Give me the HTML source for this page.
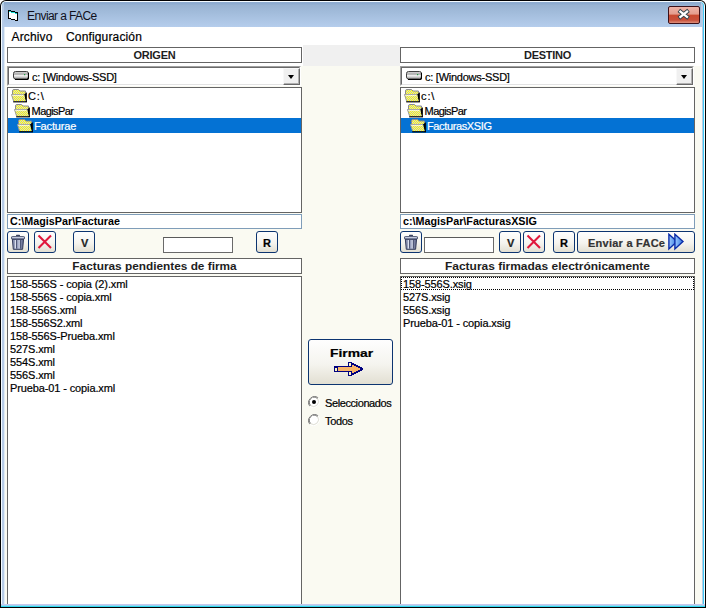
<!DOCTYPE html>
<html><head><meta charset="utf-8">
<style>
*{margin:0;padding:0;box-sizing:border-box}
html,body{width:706px;height:608px;overflow:hidden;background:#fff;font-family:"Liberation Sans",sans-serif;font-size:11px;color:#000}
.a{position:absolute}
.t{position:absolute;white-space:nowrap;line-height:13px;-webkit-text-stroke:0.2px currentColor}
.li{letter-spacing:-0.12px}
.b{font-weight:bold}
.hdr{position:absolute;border:1px solid #646464;background:#fff;height:16px}
.hdr span{position:absolute;left:0;right:0;text-align:center;top:1px;line-height:13px;font-weight:bold;color:#1e1e1e}
.combo{position:absolute;height:20px;background:#fff;border-top:1px solid #a0a0a0;border-left:1px solid #a0a0a0;border-right:1px solid #fff;border-bottom:1px solid #fff}
.combo .in{position:absolute;left:0;top:0;right:0;bottom:0;border-top:1px solid #696969;border-left:1px solid #696969;border-right:1px solid #e3e3e3;border-bottom:1px solid #e3e3e3}
.dd{position:absolute;width:17px;height:17px;background:#f0f0f0;border-top:1px solid #f8f8f8;border-left:1px solid #f8f8f8;border-right:1px solid #696969;border-bottom:1px solid #696969;box-shadow:inset -1px -1px 0 #b0b0b0}
.dd i{position:absolute;left:3.6px;top:6px;width:0;height:0;border-left:3.6px solid transparent;border-right:3.6px solid transparent;border-top:4.2px solid #000}
.list{position:absolute;border:1px solid #646464;background:#fff}
.path{position:absolute;border:1px solid #7f9db9;background:#fff;height:15px}
.path span{position:absolute;left:2px;top:1px;line-height:12px;font-size:10px;font-weight:bold;transform:scaleX(1.075);transform-origin:0 0}
.btn{position:absolute;width:22px;height:22px;border:1px solid #0c3470;border-radius:3px;background:linear-gradient(#fefefe 0%,#f5f4ef 55%,#e2dfd2 100%)}
.tb{position:absolute;height:16px;border:1px solid #6a6a6a;border-top-color:#5a5a5a;background:#fff}
.sel{position:absolute;background:#0472d4}
</style></head><body>
<svg width="0" height="0" style="position:absolute">
<defs>
<pattern id="dith" width="2" height="2" patternUnits="userSpaceOnUse"><rect width="2" height="2" fill="#d0d0d8"/><rect width="1" height="1" fill="#ffff00"/><rect x="1" y="1" width="1" height="1" fill="#ffff00"/></pattern>
<symbol id="folder" viewBox="0 0 17 14">
<path d="M1.5,5.5 V2 Q1.5,0.5 3,0.5 H7.5 L9,2 H14.5 V5 Z" fill="url(#dith)"/>
<path d="M1.5,5.5 V2 Q1.5,0.5 3,0.5 H7.5 L9,2 H14.5 V4" fill="none" stroke="#8c8c8c" stroke-width="1"/>
<path d="M13.2,5.2 L15.9,3.2 V12.9 H14.6 Z" fill="#000"/>
<path d="M0.5,5.5 H13 L14.8,12.2 H2.6 Z" fill="url(#dith)"/>
<path d="M2.6,12.2 L0.5,5.5 H13" fill="none" stroke="#9a9a9a" stroke-width="1"/>
<path d="M1.3,6.3 H12.5" stroke="#fff" stroke-width="0.8"/>
<path d="M2.2,12.8 H15.9" stroke="#000" stroke-width="1.2"/>
</symbol>
<symbol id="drive" viewBox="0 0 16 9">
<linearGradient id="dg" x1="0" y1="0" x2="0" y2="1"><stop offset="0" stop-color="#e0e0e0"/><stop offset="0.35" stop-color="#a8a8a8"/><stop offset="0.55" stop-color="#f4f4f4"/><stop offset="0.75" stop-color="#c8c8c8"/><stop offset="1" stop-color="#909090"/></linearGradient>
<rect x="0.5" y="0.5" width="15" height="7.5" rx="2" fill="url(#dg)" stroke="#404040" stroke-width="1"/>
<path d="M2,8.5 H14 Q15.5,8.5 15.5,6.5 V2" fill="none" stroke="#000" stroke-width="1.2"/>
<rect x="11" y="3" width="1.2" height="1.2" fill="#20a040"/>
</symbol>
<symbol id="trash" viewBox="0 0 22 22">
<linearGradient id="tg" x1="0" y1="0" x2="1" y2="0"><stop offset="0" stop-color="#8088a8"/><stop offset="0.5" stop-color="#a4acc8"/><stop offset="1" stop-color="#5c6488"/></linearGradient>
<rect x="9" y="3.8" width="4" height="1.6" rx="0.6" fill="#3c4462"/>
<path d="M5.3,8 L6.3,18.3 H15.6 L16.6,8 Z" fill="url(#tg)" stroke="#343c5a" stroke-width="1"/>
<path d="M8.4,9 V17.5 M12.2,9 V17.5" stroke="#e4e8f4" stroke-width="1"/>
<path d="M9.6,9 V17.5 M13.4,9 V17.5" stroke="#485070" stroke-width="1"/>
<rect x="4.5" y="5.5" width="13" height="2.6" rx="1" fill="#a0a8c4" stroke="#343c5a" stroke-width="1"/>
<path d="M5.3,6.2 H16.7" stroke="#dfe4f2" stroke-width="0.8"/>
</symbol>
<symbol id="redx" viewBox="0 0 22 22">
<path d="M4.5,4.5 L17,17 M17,4.5 L4.5,17" stroke="#e0183c" stroke-width="2.1"/>
</symbol>
<symbol id="ddarrow" viewBox="0 0 18 18">
<linearGradient id="ag" x1="0" y1="0" x2="1" y2="0"><stop offset="0" stop-color="#9ccaff"/><stop offset="1" stop-color="#3478e0"/></linearGradient>
<path d="M0.9,1.2 L9,8.6 L0.9,15.9 Z" fill="url(#ag)" stroke="#0a2ca8" stroke-width="1.4" stroke-linejoin="miter"/>
<path d="M6.9,1.2 L15,8.6 L6.9,15.9 Z" fill="url(#ag)" stroke="#0a2ca8" stroke-width="1.4" stroke-linejoin="miter"/>
</symbol>
<symbol id="radio" viewBox="0 0 12 12">
<path d="M10.2,1.8 A6,6 0 0 0 1.8,10.2" fill="none" stroke="#808080" stroke-width="1"/>
<path d="M9.5,2.5 A5,5 0 0 0 2.5,9.5" fill="none" stroke="#404040" stroke-width="1"/>
<circle cx="6" cy="6" r="4.4" fill="#fff"/>
<path d="M1.8,10.2 A6,6 0 0 0 10.2,1.8" fill="none" stroke="#fff" stroke-width="1"/>
<path d="M2.5,9.5 A5,5 0 0 0 9.5,2.5" fill="none" stroke="#e0e0d8" stroke-width="1"/>
</symbol>
</defs></svg>
<!-- window frame -->
<div class="a" style="left:0;top:0;width:706px;height:608px;background:#000;border-radius:6px 6px 0 0"></div>
<div class="a" style="left:1px;top:1px;width:704px;height:607px;background:#f4fbff;border-radius:5px 5px 0 0"></div>
<div class="a" style="left:2px;top:2px;width:702px;height:606px;background:#40c8f4;border-radius:4px 4px 0 0"></div>
<div class="a" style="left:2px;top:2px;width:701px;height:606px;background:#b6cbe6;border-radius:4px 4px 0 0"></div>
<!-- title gradient -->
<div class="a" style="left:4px;top:2px;width:697px;height:25px;background:linear-gradient(#8eacd0 0px,#8eacd0 2px,#98b3d2 3px,#b5cdec 25px)"></div>
<!-- title icon -->
<svg class="a" style="left:0;top:0" width="20" height="22" viewBox="0 0 20 22" shape-rendering="crispEdges">
<path d="M9,11 H11 V12 H15 V13 H17 V20 H15 V19 H11 V18 H9 Z" fill="#fff"/>
<path d="M9,11h2v1h4v1h2v1h-2v-1h-4v-1h-2z" fill="#18e0d8"/>
<rect x="8" y="10" width="3" height="1" fill="#000"/><rect x="11" y="11" width="4" height="1" fill="#000"/><rect x="15" y="12" width="3" height="1" fill="#000"/>
<rect x="8" y="10" width="1" height="9" fill="#000"/><rect x="17" y="12" width="1" height="9" fill="#000"/>
<rect x="8" y="18" width="3" height="1" fill="#000"/><rect x="11" y="19" width="4" height="1" fill="#000"/><rect x="15" y="20" width="3" height="1" fill="#000"/>
</svg>
<div class="t" style="left:27px;top:9px;font-size:12px;line-height:14px;color:#10101c;letter-spacing:-0.6px;-webkit-text-stroke:0">Enviar a FACe</div>
<!-- close button -->
<div class="a" style="left:668px;top:6px;width:32px;height:18px;border:1px solid #3c1018;border-radius:2px;background:linear-gradient(#eeb4a8 0,#e49c8c 45%,#c94a30 50%,#c8503a 82%,#e0907c 100%)"></div>
<svg class="a" style="left:664px;top:2px" width="40" height="26" viewBox="664 2 40 26">
<path d="M680.4,11.6 L687,16.9 M687,11.6 L680.4,16.9" stroke="#2c4048" stroke-width="4.0" stroke-linecap="square"/>
<path d="M680.4,11.6 L687,16.9 M687,11.6 L680.4,16.9" stroke="#fff" stroke-width="2.3" stroke-linecap="square"/>
</svg>
<!-- client -->
<div class="a" style="left:4px;top:27px;width:1px;height:577px;background:#e2ecf4"></div>
<div class="a" style="left:5px;top:27px;width:697px;height:577px;background:#fafaf2"></div>
<div class="a" style="left:5px;top:27px;width:697px;height:18px;background:#fff"></div>
<div class="a" style="left:5px;top:45px;width:298px;height:21px;background:#fff"></div>
<div class="a" style="left:303px;top:45px;width:97px;height:21px;background:#f0f0f0"></div>
<div class="a" style="left:400px;top:45px;width:302px;height:21px;background:#fff"></div>
<div class="t" style="left:11.5px;top:30px;font-size:12px;line-height:14px;letter-spacing:0.15px">Archivo</div>
<div class="t" style="left:66px;top:30px;font-size:12px;line-height:14px;letter-spacing:0.15px">Configuración</div>

<!-- LEFT PANEL -->
<div class="hdr" style="left:7px;top:47px;width:295px"><span style="letter-spacing:-0.24px">ORIGEN</span></div>
<div class="combo" style="left:7px;top:66px;width:294px">
 <div class="in"></div>
</div>
<div class="dd" style="left:283px;top:68px"><i></i></div>
<svg class="a" style="left:13px;top:71px" width="16" height="9"><use href="#drive"/></svg>
<div class="t" style="left:32px;top:71px;letter-spacing:-0.25px">c: [Windows-SSD]</div>
<div class="list" style="left:7px;top:87px;width:295px;height:126px"></div>
<div class="sel" style="left:8px;top:118px;width:293px;height:15px"></div>
<svg class="a" style="left:11px;top:89px" width="17" height="14"><use href="#folder"/></svg>
<div class="t" style="left:28px;top:90px;letter-spacing:0.9px">C:\</div>
<svg class="a" style="left:14px;top:104px" width="17" height="14"><use href="#folder"/></svg>
<div class="t" style="left:31.6px;top:105px;letter-spacing:-0.6px">MagisPar</div>
<svg class="a" style="left:17px;top:119px" width="17" height="14"><use href="#folder"/></svg>
<div class="t" style="left:34px;top:120px;color:#fff;letter-spacing:-0.15px">Facturae</div>
<div class="path" style="left:7px;top:214px;width:295px"><span>C:\MagisPar\Facturae</span></div>
<div class="btn" style="left:7px;top:231px"></div><svg class="a" style="left:7px;top:231px" width="22" height="22"><use href="#trash"/></svg>
<div class="btn" style="left:34px;top:231px"></div><svg class="a" style="left:34px;top:231px" width="22" height="22"><use href="#redx"/></svg>
<div class="btn" style="left:73px;top:231px"><div class="t b" style="left:7px;top:5px;color:#222">V</div></div>
<div class="tb" style="left:163px;top:237px;width:70px"></div>
<div class="btn" style="left:256px;top:231px"><div class="t b" style="left:6px;top:5px">R</div></div>
<div class="hdr" style="left:7px;top:258px;width:295px"><span style="transform:scaleX(1.075)">Facturas pendientes de firma</span></div>
<div class="list" style="left:7px;top:276px;width:295px;height:340px"></div>
<div class="t li" style="left:10px;top:278px">158-556S - copia (2).xml</div>
<div class="t li" style="left:10px;top:291px">158-556S - copia.xml</div>
<div class="t li" style="left:10px;top:304px">158-556S.xml</div>
<div class="t li" style="left:10px;top:317px">158-556S2.xml</div>
<div class="t li" style="left:10px;top:330px">158-556S-Prueba.xml</div>
<div class="t li" style="left:10px;top:343px">527S.xml</div>
<div class="t li" style="left:10px;top:356px">554S.xml</div>
<div class="t li" style="left:10px;top:369px">556S.xml</div>
<div class="t li" style="left:10px;top:382px">Prueba-01 - copia.xml</div>

<!-- RIGHT PANEL -->
<div class="hdr" style="left:400px;top:47px;width:295px"><span style="letter-spacing:-0.28px">DESTINO</span></div>
<div class="combo" style="left:400px;top:66px;width:294px">
 <div class="in"></div>
</div>
<div class="dd" style="left:676px;top:68px"><i></i></div>
<svg class="a" style="left:406px;top:71px" width="16" height="9"><use href="#drive"/></svg>
<div class="t" style="left:425px;top:71px;letter-spacing:-0.25px">c: [Windows-SSD]</div>
<div class="list" style="left:400px;top:87px;width:295px;height:126px"></div>
<div class="sel" style="left:401px;top:118px;width:293px;height:15px"></div>
<svg class="a" style="left:404px;top:89px" width="17" height="14"><use href="#folder"/></svg>
<div class="t" style="left:421px;top:90px;letter-spacing:0.9px">c:\</div>
<svg class="a" style="left:407px;top:104px" width="17" height="14"><use href="#folder"/></svg>
<div class="t" style="left:424.6px;top:105px;letter-spacing:-0.6px">MagisPar</div>
<svg class="a" style="left:410px;top:119px" width="17" height="14"><use href="#folder"/></svg>
<div class="t" style="left:427px;top:120px;color:#fff;letter-spacing:-0.37px">FacturasXSIG</div>
<div class="path" style="left:400px;top:214px;width:295px"><span>c:\MagisPar\FacturasXSIG</span></div>
<div class="btn" style="left:400px;top:231px"></div><svg class="a" style="left:400px;top:231px" width="22" height="22"><use href="#trash"/></svg>
<div class="tb" style="left:424px;top:237px;width:70px"></div>
<div class="btn" style="left:499px;top:231px"><div class="t b" style="left:7px;top:5px;color:#222">V</div></div>
<div class="btn" style="left:523px;top:231px"></div><svg class="a" style="left:523px;top:231px" width="22" height="22"><use href="#redx"/></svg>
<div class="btn" style="left:553px;top:231px"><div class="t b" style="left:6px;top:5px">R</div></div>
<div class="btn" style="left:577px;top:231px;width:118px"><div class="t b" style="left:10px;top:5px;color:#333;letter-spacing:0.25px">Enviar a FACe</div></div><svg class="a" style="left:668px;top:233px" width="18" height="18"><use href="#ddarrow"/></svg>
<div class="hdr" style="left:400px;top:258px;width:295px"><span style="transform:scaleX(1.089)">Facturas firmadas electrónicamente</span></div>
<div class="list" style="left:400px;top:276px;width:295px;height:340px"></div>
<div class="a" style="left:401px;top:277px;width:293px;height:13px;border:1px dotted #000"></div>
<div class="t li" style="left:403px;top:278px">158-556S.xsig</div>
<div class="t li" style="left:403px;top:291px">527S.xsig</div>
<div class="t li" style="left:403px;top:304px">556S.xsig</div>
<div class="t li" style="left:403px;top:317px">Prueba-01 - copia.xsig</div>

<!-- MIDDLE -->
<div class="btn" style="left:308px;top:339px;width:85px;height:46px"><div class="t b" style="left:21px;top:7px;transform:scaleX(1.26);transform-origin:0 0">Firmar</div></div>
<svg class="a" style="left:330px;top:358px" width="40" height="22" viewBox="330 358 40 22" shape-rendering="crispEdges">
<path d="M334,366 H348 V362 H352 V363 H354 V364 H356 V365 H358 V366 H360 V367 H362 V368 H363 V370 H362 V371 H360 V372 H358 V373 H356 V374 H354 V375 H352 V376 H348 V372 H334 Z" fill="#000080"/>
<path d="M338,367 H352 V365 H354 V366 H356 V367 H358 V368 H360 V370 H358 V371 H356 V372 H354 V373 H352 V371 H338 Z" fill="#f8b468"/>
<rect x="335" y="368" width="2" height="3" fill="#fff8c0"/>
<rect x="349" y="363" width="2" height="3" fill="#fff8c0"/>
<rect x="349" y="372" width="2" height="3" fill="#fff8c0"/>
</svg>
<svg class="a" style="left:308px;top:396px" width="12" height="12"><use href="#radio"/></svg><div class="a" style="left:312px;top:400px;width:4px;height:4px;background:#000;border-radius:2px"></div>
<div class="t" style="left:325px;top:397px;letter-spacing:-0.4px">Seleccionados</div>
<svg class="a" style="left:308px;top:414px" width="12" height="12"><use href="#radio"/></svg>
<div class="t" style="left:325px;top:415px;letter-spacing:-0.34px">Todos</div>

<!-- bottom frame -->
<div class="a" style="left:1px;top:604px;width:704px;height:1px;background:#c6c8ee"></div>
<div class="a" style="left:1px;top:605px;width:704px;height:1px;background:#9ad4ee"></div>
<div class="a" style="left:1px;top:606px;width:704px;height:1px;background:#30d8f0"></div>
<div class="a" style="left:0;top:607px;width:706px;height:1px;background:#000"></div>
</body></html>
